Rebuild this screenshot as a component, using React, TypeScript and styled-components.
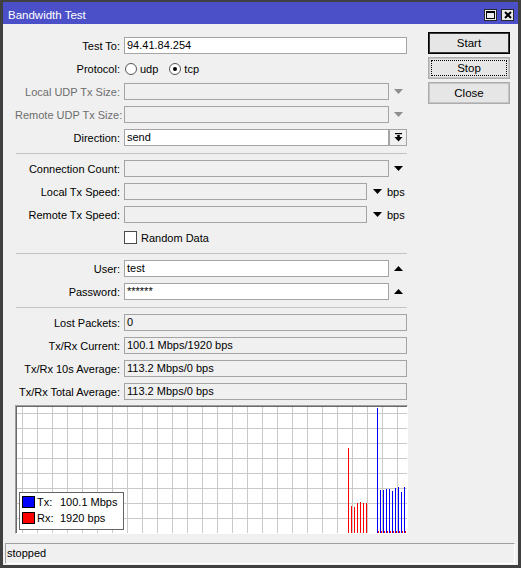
import React from 'react';
import styled, { createGlobalStyle } from 'styled-components';

const GlobalStyle = createGlobalStyle`
  html, body {
    margin: 0;
    padding: 0;
    background: #f0f0f0;
  }
  body {
    font-family: "Liberation Sans", Arial, sans-serif;
    font-size: 11px;
    color: #000;
  }
  * {
    box-sizing: border-box;
  }
`;

const Window = styled.div`
  width: 521px;
  height: 568px;
  display: flex;
  flex-direction: column;
  background: #f0f0f0;
  border-style: solid;
  border-color: #404040;
  border-width: 2px 3px 3px 3px;
`;

const TitleBar = styled.div`
  height: 22px;
  flex-shrink: 0;
  display: flex;
  align-items: center;
  padding: 4px 4px 0 5px;
  background: #4c50c8;
  color: #fff;
  font-size: 11.5px;
`;

const Title = styled.div`
  flex: 1;
`;

const TitleButtons = styled.div`
  display: flex;
  gap: 4px;
`;

const TitleButton = styled.span`
  width: 13px;
  height: 12px;
  display: flex;
  align-items: center;
  justify-content: center;
  border: 1px solid #2a2a2a;
  background: #ececec;
`;

const Body = styled.div`
  flex: 1;
  display: flex;
  padding: 8px 7px 0 12px;
`;

const FormColumn = styled.div`
  width: 393px;
  display: flex;
  flex-direction: column;
  gap: 6px;
  padding-top: 5px;
`;

const ButtonColumn = styled.div`
  width: 82px;
  margin-left: 20px;
  display: flex;
  flex-direction: column;
  gap: 3px;
`;

const Button = styled.button<{ $default?: boolean; $focused?: boolean }>`
  height: 22px;
  font-family: inherit;
  font-size: 11.5px;
  color: #000;
  background: #e6e6e6;
  border: 1px solid ${p => (p.$default ? '#000' : '#adadad')};
  box-shadow: inset 0 0 0 1px ${p => (p.$default ? '#3a3a3a' : '#c4c4c4')};
  padding: 0;
  outline: ${p => (p.$focused ? '1px dotted #000' : 'none')};
  outline-offset: -4px;
`;

const Row = styled.div`
  display: grid;
  grid-template-columns: 105px auto;
  column-gap: 4px;
  align-items: center;
  height: 17px;
`;

const Label = styled.div<{ $disabled?: boolean }>`
  text-align: right;
  white-space: nowrap;
  color: ${p => (p.$disabled ? '#6d6d6d' : '#000')};
`;

const Field = styled.div`
  display: flex;
  align-items: center;
  height: 17px;
`;

const TextBox = styled.div<{ $width: number; $editable?: boolean }>`
  width: ${p => p.$width}px;
  height: 17px;
  border: 1px solid #a4a4a4;
  background: ${p => (p.$editable ? '#fff' : '#f0f0f0')};
  padding: 0 2px;
  line-height: 15px;
  white-space: nowrap;
  overflow: hidden;
`;

const ArrowSlot = styled.span`
  width: 18px;
  height: 17px;
  display: flex;
  align-items: center;
  justify-content: center;
`;

const SmallArrow = styled.span`
  display: flex;
  margin-left: 6px;
`;

const Unit = styled.span`
  margin-left: 5px;
`;

const DropButton = styled.span`
  width: 18px;
  height: 17px;
  display: flex;
  align-items: center;
  justify-content: center;
  border: 1px solid #a4a4a4;
  background: #f0f0f0;
`;

const RadioGroup = styled.div`
  display: flex;
  align-items: center;
  gap: 11px;
  padding-left: 1px;
`;

const RadioOption = styled.label`
  display: flex;
  align-items: center;
  gap: 3px;
`;

const CheckOption = styled.label`
  display: flex;
  align-items: center;
  gap: 4px;
`;

const CheckBox = styled.span`
  width: 13px;
  height: 13px;
  border: 1px solid #4a4a4a;
  background: #fff;
`;

const Separator = styled.div`
  height: 1px;
  margin: 1px 1px 0 1px;
  background: #c3c3c3;
`;

const Chart = styled.div`
  position: relative;
  height: 129px;
  margin-top: -1px;
  padding: 1px 0 0 1px;
  border: 1px solid;
  border-color: #a0a0a0 #fff #fff #a0a0a0;
  box-shadow: inset 1px 1px 0 #6a6a6a;
  background: #fff;
  svg {
    display: block;
  }
`;

const Legend = styled.div`
  position: absolute;
  left: 3px;
  top: 86px;
  width: 105px;
  height: 38px;
  border: 1px solid #646464;
  background: #fff;
  padding: 3px 2px 0 2px;
`;

const LegendRow = styled.div`
  display: flex;
  align-items: flex-start;
  height: 16px;
  line-height: 13px;
`;

const Swatch = styled.span<{ $color: string }>`
  width: 13px;
  height: 12px;
  border: 1px solid #000;
  background: ${p => p.$color};
  margin-right: 2px;
`;

const LegendKey = styled.span`
  width: 23px;
`;

const StatusBar = styled.div`
  height: 21px;
  flex-shrink: 0;
  margin: 0 3px 1px 2px;
  padding-left: 1px;
  border: 1px solid;
  border-color: #a0a0a0 #fff #fff #a0a0a0;
  line-height: 19px;
`;

const Triangle = ({ up, color }: { up?: boolean; color: string }) => (
  <svg width="9" height="5" viewBox="0 0 9 5">
    <polygon points={up ? '0,5 9,5 4.5,0' : '0,0 9,0 4.5,5'} fill={color} />
  </svg>
);

const Radio = ({ checked }: { checked?: boolean }) => (
  <svg width="12" height="12" viewBox="0 0 12 12">
    <circle cx="6" cy="6" r="5.5" fill="#fff" stroke="#555" />
    {checked && <circle cx="6" cy="6" r="2" fill="#000" />}
  </svg>
);

const DropIcon = () => (
  <svg width="9" height="9" viewBox="0 0 9 9">
    <rect x="1" y="0" width="7" height="1.2" fill="#000" />
    <rect x="3.2" y="2" width="2.6" height="2" fill="#000" />
    <polygon points="0.5,4 8.5,4 4.5,8.5" fill="#000" />
  </svg>
);

type RowKind = 'full' | 'arrow' | 'arrowUp' | 'drop' | 'bps';

interface FieldRow {
  label: string;
  value?: string;
  kind: RowKind;
  editable?: boolean;
  disabled?: boolean;
}

const renderField = (r: FieldRow) => {
  const arrowColor = r.disabled ? '#8e8e8e' : '#000';
  switch (r.kind) {
    case 'full':
      return <TextBox $width={283} $editable={r.editable}>{r.value}</TextBox>;
    case 'arrow':
    case 'arrowUp':
      return (
        <>
          <TextBox $width={265} $editable={r.editable}>{r.value}</TextBox>
          <ArrowSlot><Triangle up={r.kind === 'arrowUp'} color={arrowColor} /></ArrowSlot>
        </>
      );
    case 'drop':
      return (
        <>
          <TextBox $width={265} $editable={r.editable}>{r.value}</TextBox>
          <DropButton><DropIcon /></DropButton>
        </>
      );
    case 'bps':
      return (
        <>
          <TextBox $width={243} $editable={r.editable}>{r.value}</TextBox>
          <SmallArrow><Triangle color={arrowColor} /></SmallArrow>
          <Unit>bps</Unit>
        </>
      );
  }
};

const FormRow = (r: FieldRow) => (
  <Row>
    <Label $disabled={r.disabled}>{r.label}</Label>
    <Field>{renderField(r)}</Field>
  </Row>
);

// chart data, x in svg coords (inner area 390x126)
const redBars = [
  { x: 331, y: 41 },
  { x: 334, y: 99 },
  { x: 337, y: 100 },
  { x: 340, y: 96 },
  { x: 343, y: 95 },
  { x: 346, y: 96 },
  { x: 349, y: 96 },
];

const blueBars = [
  { x: 360, y: 1 },
  { x: 363, y: 83 },
  { x: 366, y: 83 },
  { x: 369, y: 82 },
  { x: 372, y: 82 },
  { x: 375, y: 84 },
  { x: 378, y: 81 },
  { x: 381, y: 80 },
  { x: 384, y: 85 },
  { x: 387, y: 80 },
];

const ChartDrawing = () => {
  const W = 390;
  const H = 126;
  const vLines: number[] = [];
  for (let x = 5; x < W; x += 15) vLines.push(x);
  const hLines: number[] = [];
  for (let y = 6; y < H; y += 15) hLines.push(y);
  return (
    <svg width={W} height={H} viewBox={`0 0 ${W} ${H}`} shapeRendering="crispEdges">
      {vLines.map(x => (
        <rect key={'v' + x} x={x} y={0} width={1} height={H} fill="#c9c9c9" />
      ))}
      {hLines.map(y => (
        <rect key={'h' + y} x={0} y={y} width={W} height={1} fill="#c9c9c9" />
      ))}
      {redBars.map(b => (
        <rect key={'r' + b.x} x={b.x} y={b.y} width={1} height={H - b.y} fill="#ff0000" />
      ))}
      {blueBars.map(b => (
        <rect key={'b' + b.x} x={b.x} y={b.y} width={1} height={H - b.y} fill="#0000ff" />
      ))}
      {blueBars.map(b => (
        <rect key={'rb' + b.x} x={b.x + 1} y={H - 2} width={1} height={2} fill="#ff0000" />
      ))}
    </svg>
  );
};

export default function App() {
  return (
    <>
      <GlobalStyle />
      <Window>
        <TitleBar>
          <Title>Bandwidth Test</Title>
          <TitleButtons>
            <TitleButton>
              <svg width="9" height="8" viewBox="0 0 9 8">
                <rect x="0.5" y="0.5" width="8" height="7" fill="none" stroke="#000" />
                <rect x="0" y="0" width="9" height="2" fill="#000" />
              </svg>
            </TitleButton>
            <TitleButton>
              <svg width="8" height="8" viewBox="0 0 8 8">
                <path d="M1 1 L7 7 M7 1 L1 7" stroke="#000" strokeWidth="2" />
              </svg>
            </TitleButton>
          </TitleButtons>
        </TitleBar>
        <Body>
          <FormColumn>
            <FormRow label="Test To:" value="94.41.84.254" kind="full" editable />
            <Row>
              <Label>Protocol:</Label>
              <RadioGroup>
                <RadioOption><Radio />udp</RadioOption>
                <RadioOption><Radio checked />tcp</RadioOption>
              </RadioGroup>
            </Row>
            <FormRow label="Local UDP Tx Size:" kind="arrow" disabled />
            <FormRow label="Remote UDP Tx Size:" kind="arrow" disabled />
            <FormRow label="Direction:" value="send" kind="drop" editable />
            <Separator />
            <FormRow label="Connection Count:" kind="arrow" />
            <FormRow label="Local Tx Speed:" kind="bps" />
            <FormRow label="Remote Tx Speed:" kind="bps" />
            <Row>
              <span />
              <CheckOption><CheckBox />Random Data</CheckOption>
            </Row>
            <Separator />
            <FormRow label="User:" value="test" kind="arrowUp" editable />
            <FormRow label="Password:" value="******" kind="arrowUp" editable />
            <Separator />
            <FormRow label="Lost Packets:" value="0" kind="full" />
            <FormRow label="Tx/Rx Current:" value="100.1 Mbps/1920 bps" kind="full" />
            <FormRow label="Tx/Rx 10s Average:" value="113.2 Mbps/0 bps" kind="full" />
            <FormRow label="Tx/Rx Total Average:" value="113.2 Mbps/0 bps" kind="full" />
            <Chart>
              <ChartDrawing />
              <Legend>
                <LegendRow>
                  <Swatch $color="#0000ff" />
                  <LegendKey>Tx:</LegendKey>
                  <span>100.1 Mbps</span>
                </LegendRow>
                <LegendRow>
                  <Swatch $color="#ff0000" />
                  <LegendKey>Rx:</LegendKey>
                  <span>1920 bps</span>
                </LegendRow>
              </Legend>
            </Chart>
          </FormColumn>
          <ButtonColumn>
            <Button $default>Start</Button>
            <Button $focused>Stop</Button>
            <Button>Close</Button>
          </ButtonColumn>
        </Body>
        <StatusBar>stopped</StatusBar>
      </Window>
    </>
  );
}
